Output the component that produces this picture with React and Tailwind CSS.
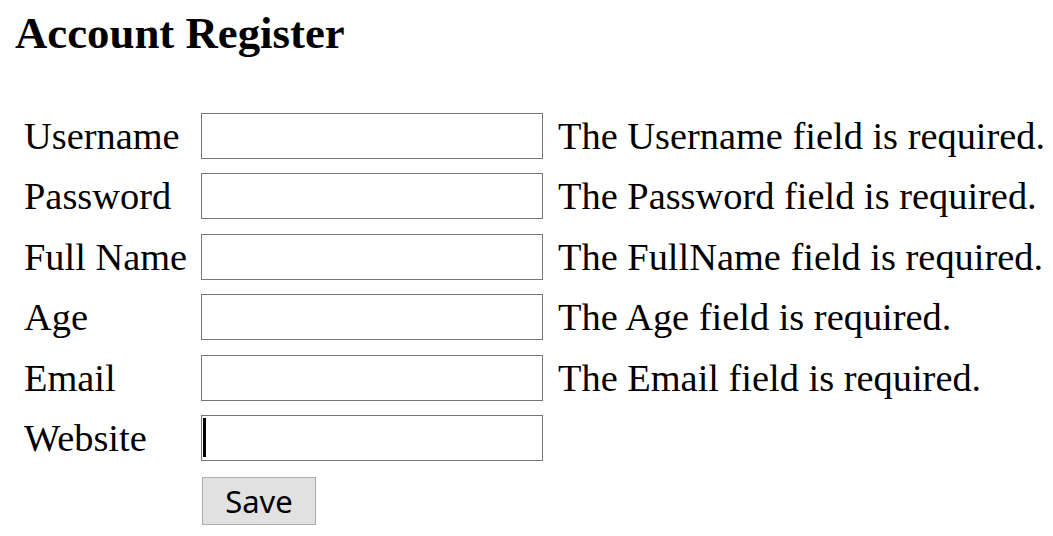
const fields = [
  { label: 'Username', error: 'The Username field is required.' },
  { label: 'Password', error: 'The Password field is required.' },
  { label: 'Full Name', error: 'The FullName field is required.' },
  { label: 'Age', error: 'The Age field is required.' },
  { label: 'Email', error: 'The Email field is required.' },
  { label: 'Website', error: '', focused: true },
];

export default function App() {
  return (
    <div className="min-h-[536px] bg-white text-black font-['Liberation_Serif','Times_New_Roman',serif] pl-[15px] pt-[7px]">
      <h3 className="text-[44.8px] leading-[52px] font-bold">Account Register</h3>
      <form className="mt-[54px] pl-[9px] flex flex-col gap-[14.4px]">
        {fields.map((f) => (
          <div key={f.label} className="flex items-start h-[46px]">
            <label className="w-[177px] text-[38.4px] leading-[46px] whitespace-nowrap">{f.label}</label>
            <div className="relative">
              <input
                type="text"
                className="block w-[342px] h-[46px] border border-[#767676] bg-white outline-none"
              />
              {f.focused && (
                <span className="absolute left-[2px] top-[3px] w-[2.5px] h-[39px] bg-black" />
              )}
            </div>
            {f.error && (
              <span className="ml-[15px] text-[38.4px] leading-[46px] whitespace-nowrap">{f.error}</span>
            )}
          </div>
        ))}
        <div className="pl-[178px] pt-[1.6px]">
          <button
            type="button"
            className="w-[114px] h-[48px] bg-[#e1e1e1] border border-[#adadad] font-['Noto_Sans','Open_Sans',sans-serif] text-[31px] leading-[46px]"
          >
            Save
          </button>
        </div>
      </form>
    </div>
  );
}
